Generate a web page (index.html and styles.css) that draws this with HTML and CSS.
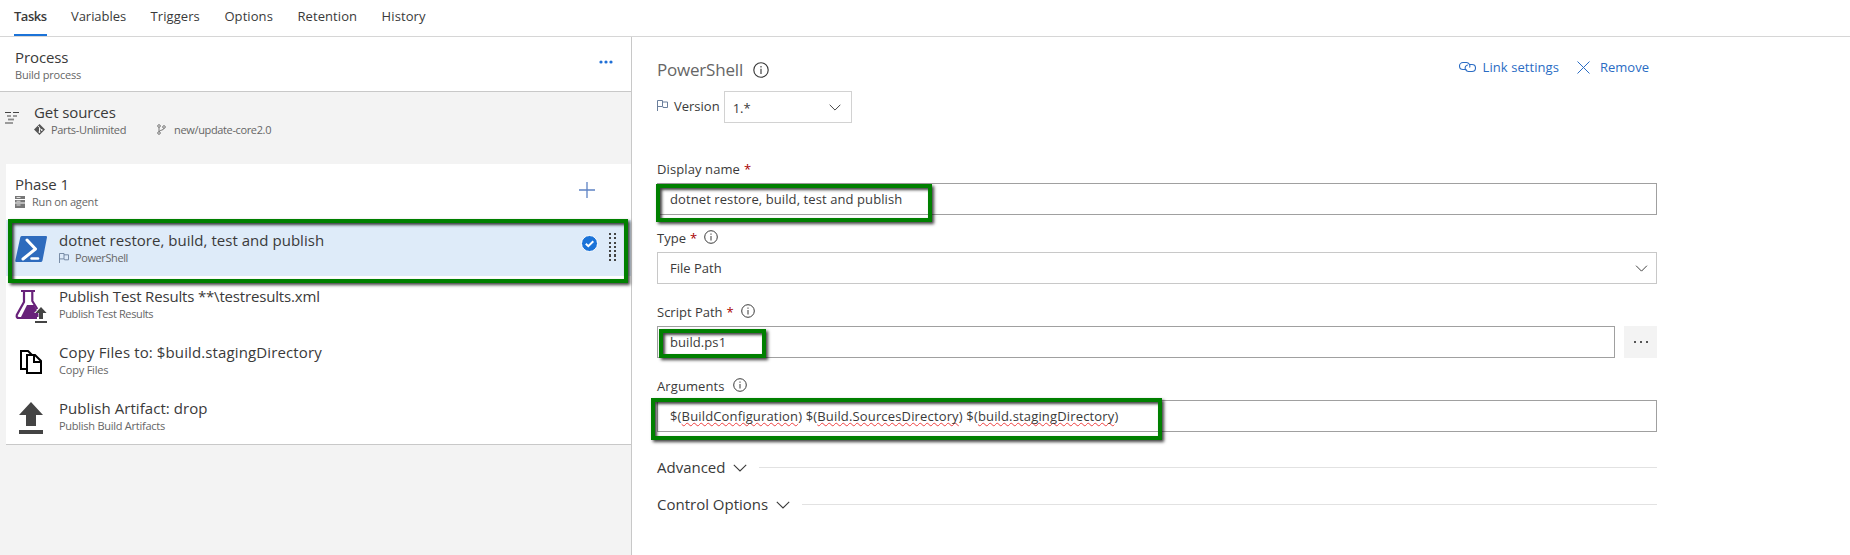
FILE: index.html
```html
<!DOCTYPE html>
<html lang="en">
<head>
<meta charset="utf-8">
<title>Build definition tasks</title>
<link rel="stylesheet" href="styles.css">
</head>
<body>
<svg class="defs" width="0" height="0">
  <symbol id="info" viewBox="0 0 14 14"><circle cx="7" cy="7" r="6.3" fill="none" stroke="currentColor"/><path d="M6.5 3.6h1v1.2h-1zM6.5 6h1v4.6h-1z" fill="currentColor"/></symbol>
  <symbol id="chev" viewBox="0 0 14 8"><path d="M.8.8 7 7 13.2.8" fill="none" stroke="currentColor" stroke-width="1.1"/></symbol>
  <symbol id="flag" viewBox="0 0 11 11"><path d="M.5 11V.5h5v6h-5M5.500 2h5v5.500H6v-1" fill="none" stroke="currentColor"/></symbol>
</svg>
<nav class="tabs">
  <a class="tab active">Tasks</a><a class="tab t-var">Variables</a><a class="tab">Triggers</a><a class="tab">Options</a><a class="tab">Retention</a><a class="tab">History</a>
</nav>
<main class="workspace">
  <aside class="pipeline">
    <section class="process">
      <div class="copy"><h2>Process</h2><p>Build process</p></div>
      <svg class="more" width="14" height="4" viewBox="0 0 14 4" fill="#1f6fd6"><circle cx="2" cy="2" r="1.6"/><circle cx="7" cy="2" r="1.6"/><circle cx="12" cy="2" r="1.6"/></svg>
    </section>
    <section class="sources">
      <svg class="src-icon" width="15" height="13" viewBox="0 0 15 13" stroke-width="1.2" fill="none"><path d="M0 1.500h6M8 1.500h6M2 5h4M8 5h4M0 12h8" stroke="#444"/><path d="M3 8.500h6" stroke="#888" stroke-width="1.800"/></svg>
      <div class="copy"><h2>Get sources</h2>
        <p class="meta">
          <svg width="11" height="11" viewBox="0 0 11 11"><path d="M5.500 0 11 5.500 5.500 11 0 5.500z" fill="#555"/><path d="M4 1.800 5.500 3.500v5M5.500 4l2 2" stroke="#f3f3f3" fill="none"/><circle cx="5.500" cy="8" r=".9" fill="#f3f3f3"/><circle cx="7.700" cy="6" r=".9" fill="#f3f3f3"/></svg>
          <span class="repo">Parts-Unlimited</span>
          <svg width="9" height="11" viewBox="0 0 9 11" fill="none" stroke="#777"><circle cx="2" cy="2" r="1.300"/><circle cx="7" cy="3" r="1.300"/><circle cx="2" cy="9" r="1.300"/><path d="M2 3.300v4.400M7 4.300c0 2-4 1.500-5 3.400"/></svg>
          <span class="branch">new/update-core2.0</span>
        </p>
      </div>
    </section>
    <section class="phase">
      <header class="phase-head">
        <div class="copy"><h2>Phase 1</h2>
          <p class="meta"><svg width="10" height="12" viewBox="0 0 10 12"><path d="M0 0h10v3H0zM0 4h10v2.500H0zM0 7.500h10V12H0z" fill="#777"/><path d="M1.500 1.500h4M1.500 5.200h4M1.500 9h4" stroke="#ddd"/></svg><span class="agent">Run on agent</span></p></div>
        <svg class="plus" width="16" height="16" viewBox="0 0 16 16"><path d="M8 0v16M0 8h16" stroke="#5d83c4" stroke-width="1.300"/></svg>
      </header>
      <div class="task selected">
        <svg class="icon" width="32" height="32" viewBox="0 0 32 32"><path d="M7 3h24q1.300 0 1 1.200L27.500 27.500q-.4 1.500-1.800 1.500H1.200Q0 29 .3 27.500L5.300 4.300Q5.700 3 7 3z" fill="#2e6bbd"/><path d="m12 7 8.500 9L8 26" fill="none" stroke="#fff" stroke-width="3" stroke-linecap="round" stroke-linejoin="round"/><path d="M16.500 25.500h6.500" stroke="#fff" stroke-width="2.500" stroke-linecap="round"/></svg>
        <div class="copy"><h2 class="t1">dotnet restore, build, test and publish</h2><p class="meta"><svg class="flag" width="10" height="10"><use href="#flag"/></svg><span class="ps">PowerShell</span></p></div>
        <svg class="check" width="17" height="17" viewBox="0 0 17 17"><circle cx="8.500" cy="8.500" r="8" fill="#1b73d8" stroke="#fff"/><path d="m4.800 8.800 2.500 2.400 5-5" fill="none" stroke="#fff" stroke-width="2"/></svg>
        <i class="grip"></i>
        <i class="mark mark-task"></i>
      </div>
      <div class="task">
        <svg class="icon" width="32" height="34" viewBox="0 0 32 34"><path d="M6 2h14M9 2v11L1.800 26Q1 29 4 29h18M17.300 2v10l5 8" fill="none" stroke="#68217a" stroke-width="2.200"/><path d="M12 16h7l5 9v3H6z" fill="#68217a"/><path d="M26 17l7 7h-4.500v6.500h-5V24H19z" fill="#fff"/><path d="M26 18l5.600 6H28v6h-4v-6h-3.600zM20 32h12v2H20z" fill="#444"/></svg>
        <div class="copy"><h2 class="t2">Publish Test Results **\testresults.xml</h2><p class="s2">Publish Test Results</p></div>
      </div>
      <div class="task">
        <svg class="icon" width="32" height="32" viewBox="0 0 32 32"><g fill="#fff" stroke="#000" stroke-width="2"><path d="M6 6h7l5 5v13H6z"/><path d="M12 10h8l6 6v12H12z"/><path d="M19 10v7h7" fill="none"/></g></svg>
        <div class="copy"><h2 class="t3">Copy Files to: $build.stagingDirectory</h2><p>Copy Files</p></div>
      </div>
      <div class="task">
        <svg class="icon" width="32" height="34" viewBox="0 0 32 34" fill="#444"><path d="M16 1 28 14h-7v11H11V14H4zM4 29h24v4H4z"/></svg>
        <div class="copy"><h2 class="t4">Publish Artifact: drop</h2><p class="s4">Publish Build Artifacts</p></div>
      </div>
    </section>
  </aside>
  <section class="details">
    <header class="details-head">
      <h1>PowerShell</h1><svg class="info-lg" width="16" height="16"><use href="#info"/></svg>
      <div class="actions">
        <svg width="17" height="12" viewBox="0 0 17 12" fill="none" stroke="#2a6cc4" stroke-width="1.100"><path d="M7.500 8.500H4a3.500 3.500 0 0 1 0-7h3.500a3.500 3.500 0 0 1 3 5"/><path d="M10 3.500h3a3.500 3.500 0 0 1 0 7H9.500a3.500 3.500 0 0 1-3-5q.8-1.500 2.500-1.500"/></svg>
        <span class="link">Link settings</span>
        <svg class="x" width="13" height="13" viewBox="0 0 13 13"><path d="m.5.5 12 12m0-12-12 12" stroke="#2a6cc4"/></svg>
        <span class="remove">Remove</span>
      </div>
    </header>
    <div class="version">
      <svg class="flag" width="11" height="11"><use href="#flag"/></svg><span class="vlabel">Version</span>
      <div class="select small"><span>1.*</span><svg width="12" height="7"><use href="#chev"/></svg></div>
    </div>
    <div class="field display">
      <label><span class="l1">Display name</span> <b>*</b></label>
      <div class="input"><span class="v1">dotnet restore, build, test and publish</span><i class="mark mark-name"></i></div>
    </div>
    <div class="field type">
      <label><span>Type</span> <b>*</b><svg width="14" height="14"><use href="#info"/></svg></label>
      <div class="select"><span class="v2">File Path</span><svg width="13" height="7"><use href="#chev"/></svg></div>
    </div>
    <div class="field script">
      <label><span>Script Path</span> <b>*</b><svg width="14" height="14"><use href="#info"/></svg></label>
      <div class="browse"><div class="input"><span class="v3">build.ps1</span><i class="mark mark-path"></i></div>
        <div class="button"><svg width="14" height="2" viewBox="0 0 14 2"><path d="M0 0h2v2H0zM6 0h2v2H6zM12 0h2v2h-2z" fill="#555"/></svg></div></div>
    </div>
    <div class="field args">
      <label><span class="l4">Arguments</span><svg width="14" height="14"><use href="#info"/></svg></label>
      <div class="input"><span class="v4">$(<u>BuildConfiguration</u>) $(<u>Build.SourcesDirectory</u>) $(<u>build.stagingDirectory</u>)</span><i class="mark mark-args"></i></div>
    </div>
    <div class="group"><span>Advanced</span><svg width="14" height="8"><use href="#chev"/></svg><hr></div>
    <div class="group"><span>Control Options</span><svg width="14" height="8"><use href="#chev"/></svg><hr></div>
  </section>
</main>
</body>
</html>
```

FILE: styles.css
```css
* { box-sizing: border-box; }
body { margin: 0; height: 555px; overflow: hidden; background: #fff; color: #3a3a3a; font: 13px/18px "Open Sans", "Noto Sans", sans-serif; display: flex; flex-direction: column; }
h1, h2, p { margin: 0; font-weight: 400; white-space: nowrap; }
span { white-space: nowrap; }
svg { flex: none; display: block; }
.defs { position: absolute; }
.tabs { height: 37px; flex: none; display: flex; padding-left: 14px; border-bottom: 1px solid #d6d6d6; }
.tab { padding-top: 7px; margin-right: 24.500px; height: 36px; letter-spacing: .08px; }
.t-var { letter-spacing: -.05px; }
.active { font-weight: 600; border-bottom: 2px solid #1b73d8; letter-spacing: -.5px; }
.workspace { flex: 1; display: flex; min-height: 0; }
.pipeline { width: 632px; flex: none; background: #f3f3f3; border-right: 1px solid #c8c8c8; }
h2 { font-size: 15px; line-height: 20px; letter-spacing: -.1px; }
p { font-size: 11px; line-height: 15px; color: #666; letter-spacing: -.2px; }
.meta { display: flex; align-items: center; }
.process { height: 55px; background: #fff; border-bottom: 1px solid #c8c8c8; display: flex; padding: 10px 18px 0 15px; }
.process .copy { flex: 1; }
.more { margin-top: 13px; }
.sources { height: 72px; display: flex; padding: 10px 0 0 5px; }
.src-icon { margin: 9px 14px 0 0; }
.repo { margin: 0 31px 0 6px; letter-spacing: -.33px; }
.branch { margin-left: 8px; letter-spacing: -.36px; }
.phase { margin-left: 6px; background: #fff; border-bottom: 1px solid #c8c8c8; }
.phase-head { height: 56px; display: flex; padding: 10px 36px 0 9px; }
.phase-head .copy { flex: 1; }
.plus { margin-top: 8px; }
.agent { margin-left: 7px; }
.task { height: 56px; display: flex; position: relative; padding: 10px 0 0 9px; }
.task .icon { margin: 3px 12px 0 0; }
.task .copy { flex: 1; }
.t1, .t3 { letter-spacing: .03px; }
.t3 { letter-spacing: .12px; }
.t2 { letter-spacing: -.17px; }
.t4 { letter-spacing: .06px; }
.s2 { letter-spacing: -.37px; }
.s4 { letter-spacing: -.26px; }
.selected { background: #deebf9; }
.flag { color: #6b7f9c; overflow: visible; }
.ps { margin-left: 6px; letter-spacing: -.4px; }
.check { margin: 5px 11px 0 0; }
.grip { width: 7px; height: 28px; margin: 3px 15px 0 0; background: repeating-linear-gradient(90deg, transparent 0 2px, #deebf9 2px 5px, transparent 5px 7px), repeating-linear-gradient(#444 0 2px, transparent 2px 4.300px); }
.mark { position: absolute; border: 4px solid #008000; box-shadow: 2px 2px 3px rgba(0,0,0,.75), inset 2px 2px 3px rgba(0,0,0,.75); z-index: 2; }
.mark-task { left: 2px; top: -1px; width: 620px; height: 64px; }
.details { flex: 1; padding: 20px 193px 0 25px; }
.details-head { height: 34px; display: flex; padding-top: 3px; }
h1 { font-size: 17px; line-height: 20px; color: #666; letter-spacing: -.2px; }
.info-lg { margin: 2px 0 0 10px; }
.actions { margin-left: auto; display: flex; align-items: center; height: 14px; color: #2a6cc4; padding-right: 8px; }
.link { margin: 0 18px 0 7px; letter-spacing: .07px; }
.remove { margin-left: 10px; }
.version { display: flex; }
.version .flag { margin-top: 9px; }
.vlabel { margin: 6px 4px 0 6px; }
.select { height: 32px; border: 1px solid #c8c8c8; padding: 0 8px 0 12px; display: flex; justify-content: space-between; align-items: center; }
.small { width: 128px; padding: 1px 10px 0 8px; border-color: #d2d2d2; }
.field { display: flex; flex-direction: column; }
label { height: 25px; display: flex; align-items: flex-start; padding-top: 2px; gap: 4px; }
label svg { margin: 1px 0 0 3px; }
.l1 { letter-spacing: .1px; }
.l4 { letter-spacing: .1px; margin-right: 1px; }
b { font-weight: 400; color: #a80000; }
.display { margin-top: 35px; }
.input { height: 32px; position: relative; border: 1px solid #a0a0a0; padding: 6px 12px; flex: 1; }
.field > .input { flex: none; }
.v1 { letter-spacing: .09px; }
.v3 { letter-spacing: .08px; }
.v4 { letter-spacing: .155px; }
.type { margin-top: 12px; }
.script, .args { margin-top: 17px; }
.browse { display: flex; gap: 9px; }
.button { width: 33px; height: 32px; background: #f3f3f3; display: flex; align-items: center; justify-content: center; }
.args { margin-bottom: 17px; }
u { text-decoration: underline wavy #ee4040 1px; text-decoration-skip-ink: none; text-underline-offset: 1px; }
.mark-name { left: -2px; top: 0; width: 276px; height: 38px; }
.mark-path { left: 1px; top: 2px; width: 107px; height: 29px; }
.mark-args { left: -7px; top: -3px; width: 511px; height: 42px; }
.group { display: flex; align-items: center; height: 37px; font-size: 15px; }
.group span { margin-top: -2px; }
.group svg { margin: 0 12px 0 8px; }
hr { flex: 1; margin: 0; border: 0; border-top: 1px solid #e2e2e2; }
```
